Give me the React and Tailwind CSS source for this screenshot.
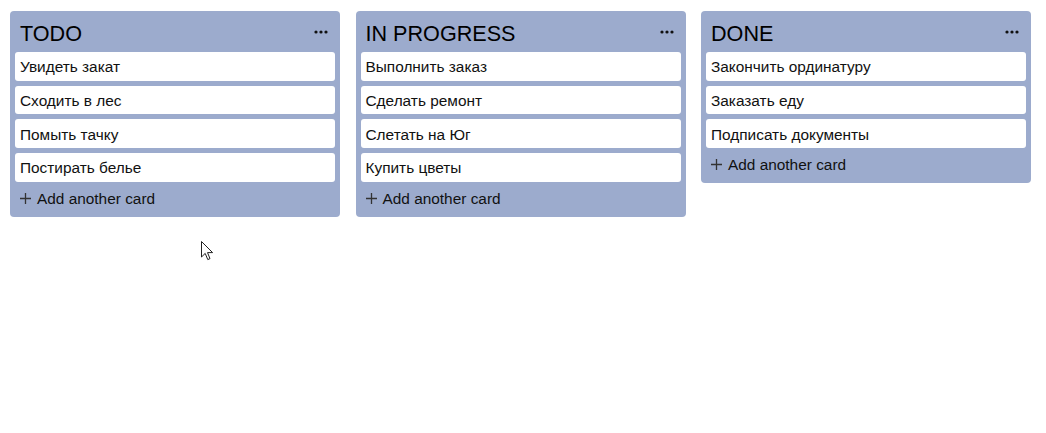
import React from "react";

const columns = [
  { title: "TODO", cards: ["Увидеть закат", "Сходить в лес", "Помыть тачку", "Постирать белье"] },
  { title: "IN PROGRESS", cards: ["Выполнить заказ", "Сделать ремонт", "Слетать на Юг", "Купить цветы"] },
  { title: "DONE", cards: ["Закончить ординатуру", "Заказать еду", "Подписать документы"] },
];

function Dots() {
  return (
    <svg width="14" height="4" viewBox="0 0 14 4" className="block">
      <circle cx="2" cy="2" r="1.6" fill="#111" />
      <circle cx="7" cy="2" r="1.6" fill="#111" />
      <circle cx="12" cy="2" r="1.6" fill="#111" />
    </svg>
  );
}

function Column({ title, cards }) {
  return (
    <div className="w-[330px] shrink-0 rounded-[4px] bg-[#9cabcd] px-[5px]">
      <div className="flex h-[41px] items-center justify-between pl-[5px] pr-[7px]">
        <span className="pt-[5px] text-[21.6px] leading-none text-black">{title}</span>
        <Dots />
      </div>
      <div className="flex flex-col gap-[5px]">
        {cards.map((c) => (
          <div key={c} className="flex h-[28.67px] items-center rounded-[3px] bg-white px-[5px] pt-[1px] text-[15.4px] text-[#111]">
            {c}
          </div>
        ))}
      </div>
      <div className="flex h-[35px] items-center gap-[6px] px-[5px] pb-[1px] text-[15.4px] text-[#111]">
        <svg width="11" height="11" viewBox="0 0 11 11" className="block">
          <path d="M5.5 0v11M0 5.5h11" stroke="#333" strokeWidth="1.3" />
        </svg>
        <span>Add another card</span>
      </div>
    </div>
  );
}

export default function App() {
  return (
    <div
      className="relative min-h-[433px] bg-white pl-[10px] pt-[11px]"
      style={{ fontFamily: '"Liberation Sans", Arial, sans-serif' }}
    >
      <div className="flex items-start gap-[15.5px]">
        {columns.map((col) => (
          <Column key={col.title} {...col} />
        ))}
      </div>
      <svg
        className="absolute left-[201px] top-[241px]"
        width="13"
        height="20"
        viewBox="0 0 13 20"
      >
        <path
          d="M0.5 0.5 L0.5 16 L4.2 12.4 L6.8 18.6 L9 17.6 L6.5 11.6 L11.6 11.6 Z"
          fill="white"
          stroke="#222"
          strokeWidth="1"
          strokeLinejoin="miter"
        />
      </svg>
    </div>
  );
}
